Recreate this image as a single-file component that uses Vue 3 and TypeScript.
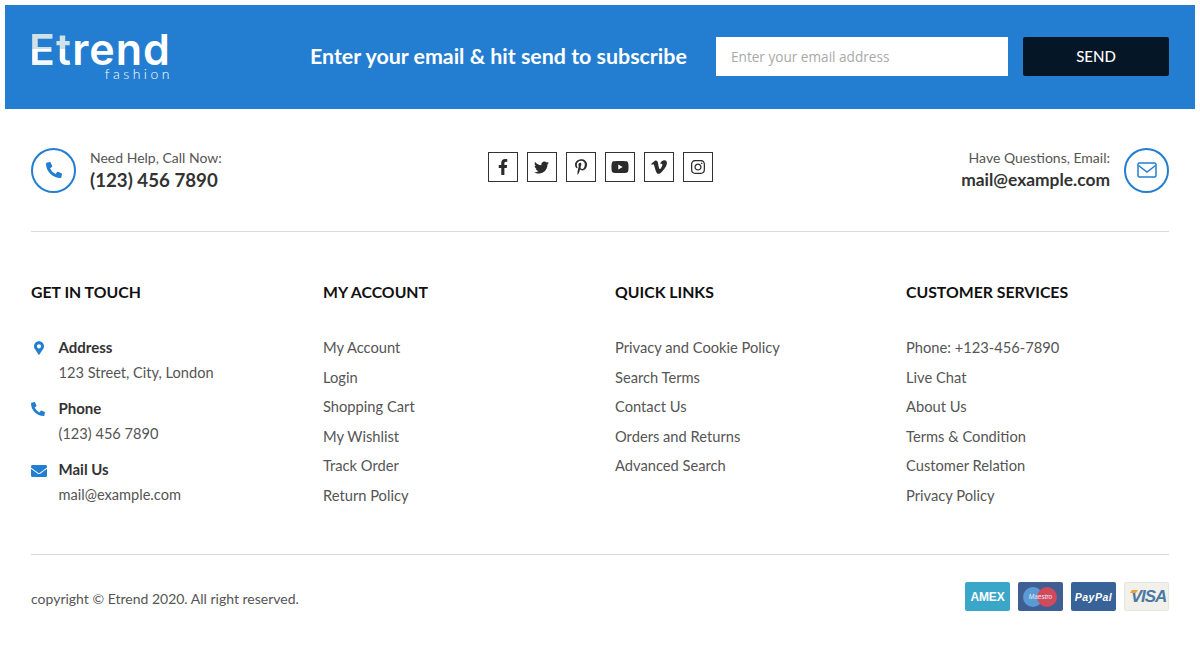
<script setup lang="ts">
interface Item { label: string; d: string; vb: string; w: number; h: number }
const socials: Item[] = [
  { label: 'Facebook', vb: '0 0 320 512', w: 10, h: 16, d: 'M279.14 288l14.22-92.66h-88.91v-60.13c0-25.35 12.42-50.06 52.24-50.06h40.42V6.26S260.43 0 225.36 0c-73.22 0-121.08 44.38-121.08 124.72v70.62H22.89V288h81.39v224h100.17V288z' },
  { label: 'Twitter', vb: '0 0 512 512', w: 15, h: 15, d: 'M459.37 151.716c.325 4.548.325 9.097.325 13.645 0 138.72-105.583 298.558-298.558 298.558-59.452 0-114.68-17.219-161.137-47.106 8.447.974 16.568 1.299 25.34 1.299 49.055 0 94.213-16.568 130.274-44.832-46.132-.975-84.792-31.188-98.112-72.772 6.498.974 12.995 1.624 19.818 1.624 9.421 0 18.843-1.3 27.614-3.573-48.081-9.747-84.143-51.98-84.143-102.985v-1.299c13.969 7.797 30.214 12.67 47.431 13.319-28.264-18.843-46.781-51.005-46.781-87.391 0-19.492 5.197-37.36 14.294-52.954 51.655 63.675 129.3 105.258 216.365 109.807-1.624-7.797-2.599-15.918-2.599-24.04 0-57.828 46.782-104.934 104.934-104.934 30.213 0 57.502 12.67 76.67 33.137 23.715-4.548 46.456-13.32 66.599-25.34-7.798 24.366-24.366 44.833-46.132 57.827 21.117-2.273 41.584-8.122 60.426-16.243-14.292 20.791-32.161 39.308-52.628 54.253z' },
  { label: 'Pinterest', vb: '0 0 384 512', w: 12, h: 16, d: 'M204 6.5C101.4 6.5 0 74.9 0 185.6 0 256 39.6 296 63.6 296c9.9 0 15.6-27.6 15.6-35.4 0-9.3-23.7-29.1-23.7-67.8 0-80.4 61.2-137.4 140.4-137.4 68.1 0 118.5 38.7 118.5 109.8 0 53.1-21.3 152.7-90.3 152.7-24.9 0-46.2-18-46.2-43.8 0-37.8 26.4-74.4 26.4-113.4 0-66.2-93.9-54.2-93.9 25.8 0 16.8 2.1 35.4 9.6 50.7-13.8 59.4-42 147.9-42 209.1 0 18.9 2.7 37.5 4.5 56.4 3.4 3.8 1.7 3.4 6.9 1.5 50.4-69 48.6-82.5 71.4-172.8 12.3 23.4 44.1 36 69.3 36 106.2 0 153.9-103.5 153.9-196.8C384 71.3 298.2 6.5 204 6.5z' },
  { label: 'YouTube', vb: '0 0 576 512', w: 18, h: 16, d: 'M549.655 124.083c-6.281-23.65-24.787-42.276-48.284-48.597C458.781 64 288 64 288 64S117.22 64 74.629 75.486c-23.497 6.322-42.003 24.947-48.284 48.597-11.412 42.867-11.412 132.305-11.412 132.305s0 89.438 11.412 132.305c6.281 23.65 24.787 41.5 48.284 47.821C117.22 448 288 448 288 448s170.78 0 213.371-11.486c23.497-6.321 42.003-24.171 48.284-47.821 11.412-42.867 11.412-132.305 11.412-132.305s0-89.438-11.412-132.305zm-317.51 213.508V175.185l142.739 81.205-142.739 81.201z' },
  { label: 'Vimeo', vb: '0 0 448 512', w: 16, h: 18, d: 'M447.8 153.6c-2 43.6-32.4 103.3-91.4 179.1-60.9 79.2-112.4 118.8-154.6 118.8-26.1 0-48.2-24.1-66.3-72.3C100.3 250 85.3 174.3 56.2 174.3c-3.4 0-15.1 7.1-35.2 21.1L0 168.2c51.6-45.3 100.9-95.7 131.8-98.5 34.9-3.4 56.3 20.5 64.4 71.5 28.7 181.5 41.4 208.9 93.6 126.7 18.7-29.6 28.8-52.1 30.2-67.6 4.8-45.9-35.8-42.8-63.3-31 22-72.1 64.1-107.1 126.2-105.1 45.8 1.2 67.5 31.1 64.9 89.4z' },
  { label: 'Instagram', vb: '0 0 448 512', w: 14, h: 16, d: 'M224.1 141c-63.6 0-114.9 51.3-114.9 114.9s51.3 114.9 114.9 114.9S339 319.5 339 255.9 287.7 141 224.1 141zm0 189.6c-41.1 0-74.7-33.5-74.7-74.7s33.5-74.7 74.7-74.7 74.7 33.5 74.7 74.7-33.6 74.7-74.7 74.7zm146.4-194.3c0 14.9-12 26.8-26.8 26.8-14.9 0-26.8-12-26.8-26.8s12-26.8 26.8-26.8 26.8 12 26.8 26.8zm76.1 27.2c-1.7-35.9-9.9-67.7-36.2-93.9-26.2-26.2-58-34.4-93.9-36.2-37-2.1-147.9-2.1-184.9 0-35.8 1.7-67.6 9.9-93.9 36.1s-34.4 58-36.2 93.9c-2.1 37-2.1 147.9 0 184.9 1.7 35.9 9.9 67.7 36.2 93.9s58 34.4 93.9 36.2c37 2.1 147.9 2.1 184.9 0 35.9-1.7 67.7-9.9 93.9-36.2 26.2-26.2 34.4-58 36.2-93.9 2.1-37 2.1-147.8 0-184.8zM398.8 388c-7.8 19.6-22.9 34.7-42.6 42.6-29.5 11.7-99.5 9-132.1 9s-102.7 2.6-132.1-9c-19.6-7.8-34.7-22.9-42.6-42.6-11.7-29.5-9-99.5-9-132.1s-2.6-102.7 9-132.1c7.8-19.6 22.9-34.7 42.6-42.6 29.5-11.7 99.5-9 132.1-9s102.7-2.6 132.1 9c19.6 7.8 34.7 22.9 42.6 42.6 11.7 29.5 9 99.5 9 132.1s2.7 102.7-9 132.1z' },
]
const phonePath = 'M497.39 361.8l-112-48a24 24 0 0 0-28 6.9l-49.6 60.6A370.66 370.66 0 0 1 130.6 204.11l60.6-49.6a23.94 23.94 0 0 0 6.9-28l-48-112A24.16 24.16 0 0 0 122.6.61l-104 24A24 24 0 0 0 0 48c0 256.5 207.9 464 464 464a24 24 0 0 0 23.4-18.6l24-104a24.29 24.29 0 0 0-14.01-27.6z'
const columns = [
  { title: 'MY ACCOUNT', links: ['My Account', 'Login', 'Shopping Cart', 'My Wishlist', 'Track Order', 'Return Policy'] },
  { title: 'QUICK LINKS', links: ['Privacy and Cookie Policy', 'Search Terms', 'Contact Us', 'Orders and Returns', 'Advanced Search'] },
  { title: 'CUSTOMER SERVICES', links: ['Phone: +123-456-7890', 'Live Chat', 'About Us', 'Terms & Condition', 'Customer Relation', 'Privacy Policy'] },
]
</script>

<template>
  <div class="page">
    <section class="banner">
      <div class="logo">
        <div class="logo-main"><span class="logo-e">Et</span>rend</div>
        <div class="logo-sub">fashion</div>
      </div>
      <h2 class="banner-title">Enter your email &amp; hit send to subscribe</h2>
      <div class="email-box">Enter your email address</div>
      <button class="send" type="button">SEND</button>
    </section>

    <div class="content">
      <section class="contact-row">
        <div class="contact">
          <span class="ring">
            <svg width="16" height="16" viewBox="0 0 512 512" class="ring-phone"><path :d="phonePath" /></svg>
          </span>
          <div class="contact-text">
            <div class="contact-label">Need Help, Call Now:</div>
            <div class="contact-value">(123) 456 7890</div>
          </div>
        </div>
        <div class="socials">
          <a v-for="s in socials" :key="s.label" class="social" :aria-label="s.label">
            <svg :width="s.w" :height="s.h" :viewBox="s.vb"><path :d="s.d" /></svg>
          </a>
        </div>
        <div class="contact contact-right">
          <div class="contact-text">
            <div class="contact-label">Have Questions, Email:</div>
            <div class="contact-value small">mail@example.com</div>
          </div>
          <span class="ring">
            <svg width="20" height="16" viewBox="0 0 20 16" fill="none" stroke="#237dd1" stroke-width="1.5">
              <rect x="1" y="1" width="18" height="14" rx="1.5" />
              <path d="M1.5 3.5 10 10l8.5-6.5" />
            </svg>
          </span>
        </div>
      </section>

      <section class="columns">
        <div>
          <h3 class="col-title">GET IN TOUCH</h3>
          <div class="touch-list">
            <div class="touch">
              <span class="touch-icon"><svg width="10" height="14" viewBox="0 0 384 512"><path d="M172.268 501.67C26.97 291.031 0 262.429 0 192 0 85.961 85.961 0 192 0s192 85.961 192 192c0 70.429-26.97 99.031-172.268 309.67-9.535 13.774-29.93 13.773-39.464 0zM192 272c44.183 0 80-35.817 80-80s-35.817-80-80-80-80 35.817-80 80 35.817 80 80 80z" /></svg></span>
              <div><div class="touch-title">Address</div><div class="touch-text">123 Street, City, London</div></div>
            </div>
            <div class="touch">
              <span class="touch-icon"><svg width="14" height="14" viewBox="0 0 512 512"><path :d="phonePath" /></svg></span>
              <div><div class="touch-title">Phone</div><div class="touch-text">(123) 456 7890</div></div>
            </div>
            <div class="touch">
              <span class="touch-icon"><svg width="16" height="16" viewBox="0 0 512 512"><path d="M502.3 190.8c3.9-3.1 9.7-.2 9.7 4.7V400c0 26.5-21.5 48-48 48H48c-26.5 0-48-21.5-48-48V195.6c0-5 5.7-7.8 9.7-4.7 22.4 17.4 52.1 39.5 154.1 113.6 21.1 15.4 56.7 47.8 92.2 47.6 35.7.3 72-32.8 92.3-47.6 102-74.1 131.6-96.3 154-113.7zM256 320c23.2.4 56.6-29.2 73.4-41.4 132.7-96.3 142.8-104.7 173.4-128.7 5.8-4.5 9.2-11.5 9.2-18.9v-19c0-26.5-21.5-48-48-48H48C21.5 64 0 85.5 0 112v19c0 7.4 3.4 14.3 9.2 18.9 30.6 23.9 40.7 32.4 173.4 128.7 16.8 12.2 50.2 41.8 73.4 41.4z" /></svg></span>
              <div><div class="touch-title">Mail Us</div><div class="touch-text">mail@example.com</div></div>
            </div>
          </div>
        </div>
        <div v-for="c in columns" :key="c.title">
          <h3 class="col-title">{{ c.title }}</h3>
          <ul class="links"><li v-for="l in c.links" :key="l">{{ l }}</li></ul>
        </div>
      </section>

      <section class="bottom">
        <div class="copyright">copyright © Etrend 2020. All right reserved.</div>
        <div class="cards">
          <span class="card amex">AMEX</span>
          <span class="card maestro"><i class="dot a"></i><i class="dot b"></i><em>Maestro</em></span>
          <span class="card paypal">PayPal</span>
          <span class="card visa">VISA</span>
        </div>
      </section>
    </div>
  </div>
</template>

<style scoped>
.page { width: 1200px; height: 648px; box-sizing: border-box; padding: 5px 5px 0; font-family: Lato, "Liberation Sans", sans-serif; color: #444; background: #fff; overflow: hidden; }
.banner { height: 104px; background: #237dd1; display: flex; align-items: center; padding: 0 26px; box-sizing: border-box; width: 1190px; }
.logo { width: 281px; margin-left: -2px; color: #fff; flex: none; margin-top: -1px; }
.logo-main { font: 600 43px/34px Inter, sans-serif; letter-spacing: 1px; white-space: nowrap; }
.logo-e { background: linear-gradient(180deg, #cfe0e6 0 50%, #fff 50% 70%, #c4dadf 100%); -webkit-background-clip: text; background-clip: text; color: transparent; }
.logo-sub { font: 300 14px/16px Lato, sans-serif; letter-spacing: 3.5px; text-align: right; width: 144px; }
.banner-title { margin: -3px 0 0; width: 406px; flex: none; font-size: 21.4px; font-weight: 700; color: #fff; white-space: nowrap; }
.email-box { width: 292px; height: 39px; flex: none; margin-top: -2px; box-sizing: border-box; background: #fff; padding-left: 15px; font: 13.6px/40px "Open Sans", sans-serif; color: #a9a9a9; }
.send { width: 146px; height: 39px; flex: none; margin: -2px 0 0 15px; background: #051727; border: 0; border-radius: 2px; color: #fff; font: 500 15px Lato, sans-serif; }
.content { width: 1138px; margin-left: 26px; }
.contact-row { height: 123px; display: flex; align-items: center; justify-content: space-between; border-bottom: 1px solid #d9d9d9; box-sizing: border-box; }
.contact { display: flex; align-items: center; gap: 14px; width: 300px; }
.contact-right { justify-content: flex-end; text-align: right; }
.contact-text { margin-top: 2px; }
.ring { width: 45px; height: 45px; box-sizing: border-box; border: 2px solid #237dd1; border-radius: 50%; display: flex; align-items: center; justify-content: center; flex: none; }
.ring-phone { fill: #237dd1; }
.contact-label { font-size: 14px; line-height: 18px; color: #555; }
.contact-value { font-size: 18.7px; line-height: 26px; font-weight: 700; color: #333; }
.contact-value.small { font-size: 17.4px; }
.socials { display: flex; gap: 9px; margin-top: -6px; }
.social { width: 30px; height: 30px; box-sizing: border-box; border: 1px solid #333; display: flex; align-items: center; justify-content: center; }
.social svg { fill: #2b2b2b; }
.columns { display: grid; grid-template-columns: 292px 292px 291px 1fr; height: 323px; box-sizing: border-box; padding-top: 48px; border-bottom: 1px solid #d9d9d9; }
.col-title { margin: 0 0 29px; font-size: 15.8px; line-height: 24px; font-weight: 700; color: #111; }
.links { list-style: none; margin: 0; padding: 0; }
.links li { font-size: 14.7px; line-height: 29.5px; color: #555; height: 29.5px; }
.touch-list { display: flex; flex-direction: column; gap: 11px; padding-top: 2px; }
.touch { display: flex; }
.touch-icon { width: 27.5px; flex: none; padding-top: 6px; display: block; height: 20px; }
.touch-icon svg { fill: #237dd1; display: block; }
.touch:first-child svg { margin-left: 3px; }
.touch-title { font-size: 15px; line-height: 25px; font-weight: 700; color: #333; }
.touch-text { font-size: 14.6px; line-height: 25px; color: #555; }
.bottom { display: flex; justify-content: space-between; align-items: flex-start; padding-top: 27px; }
.copyright { font-size: 14px; line-height: 20px; color: #555; margin-top: 7px; }
.cards { display: flex; gap: 8px; }
.card { width: 45px; height: 29px; border-radius: 2px; box-sizing: border-box; display: flex; align-items: center; justify-content: center; color: #fff; position: relative; font-family: "Liberation Sans", sans-serif; overflow: hidden; }
.amex { background: #3aa7c9; font-size: 12px; font-weight: 700; letter-spacing: -.2px; }
.maestro { background: #3f5f93; }
.dot { position: absolute; width: 20px; height: 20px; border-radius: 50%; top: 4.5px; }
.dot.a { left: 5px; background: #5b9bd5; }
.dot.b { left: 19px; background: #d1495b; }
.maestro em { position: relative; font-size: 6.5px; color: #e6eef6; }
.paypal { background: #386399; font-size: 10.5px; font-weight: 700; font-style: italic; letter-spacing: .5px; }
.visa { background: #f1f0ea; border: 1px solid #e6e6e0; color: #4b78a5; font-size: 17px; font-weight: 700; font-style: italic; letter-spacing: -1px; padding-left: 4px; }
.visa::before { content: ""; position: absolute; left: 6px; top: 7px; width: 6px; height: 3px; background: #e8a33a; transform: skewX(-30deg); }
</style>

<style>
body { margin: 0; }
</style>
